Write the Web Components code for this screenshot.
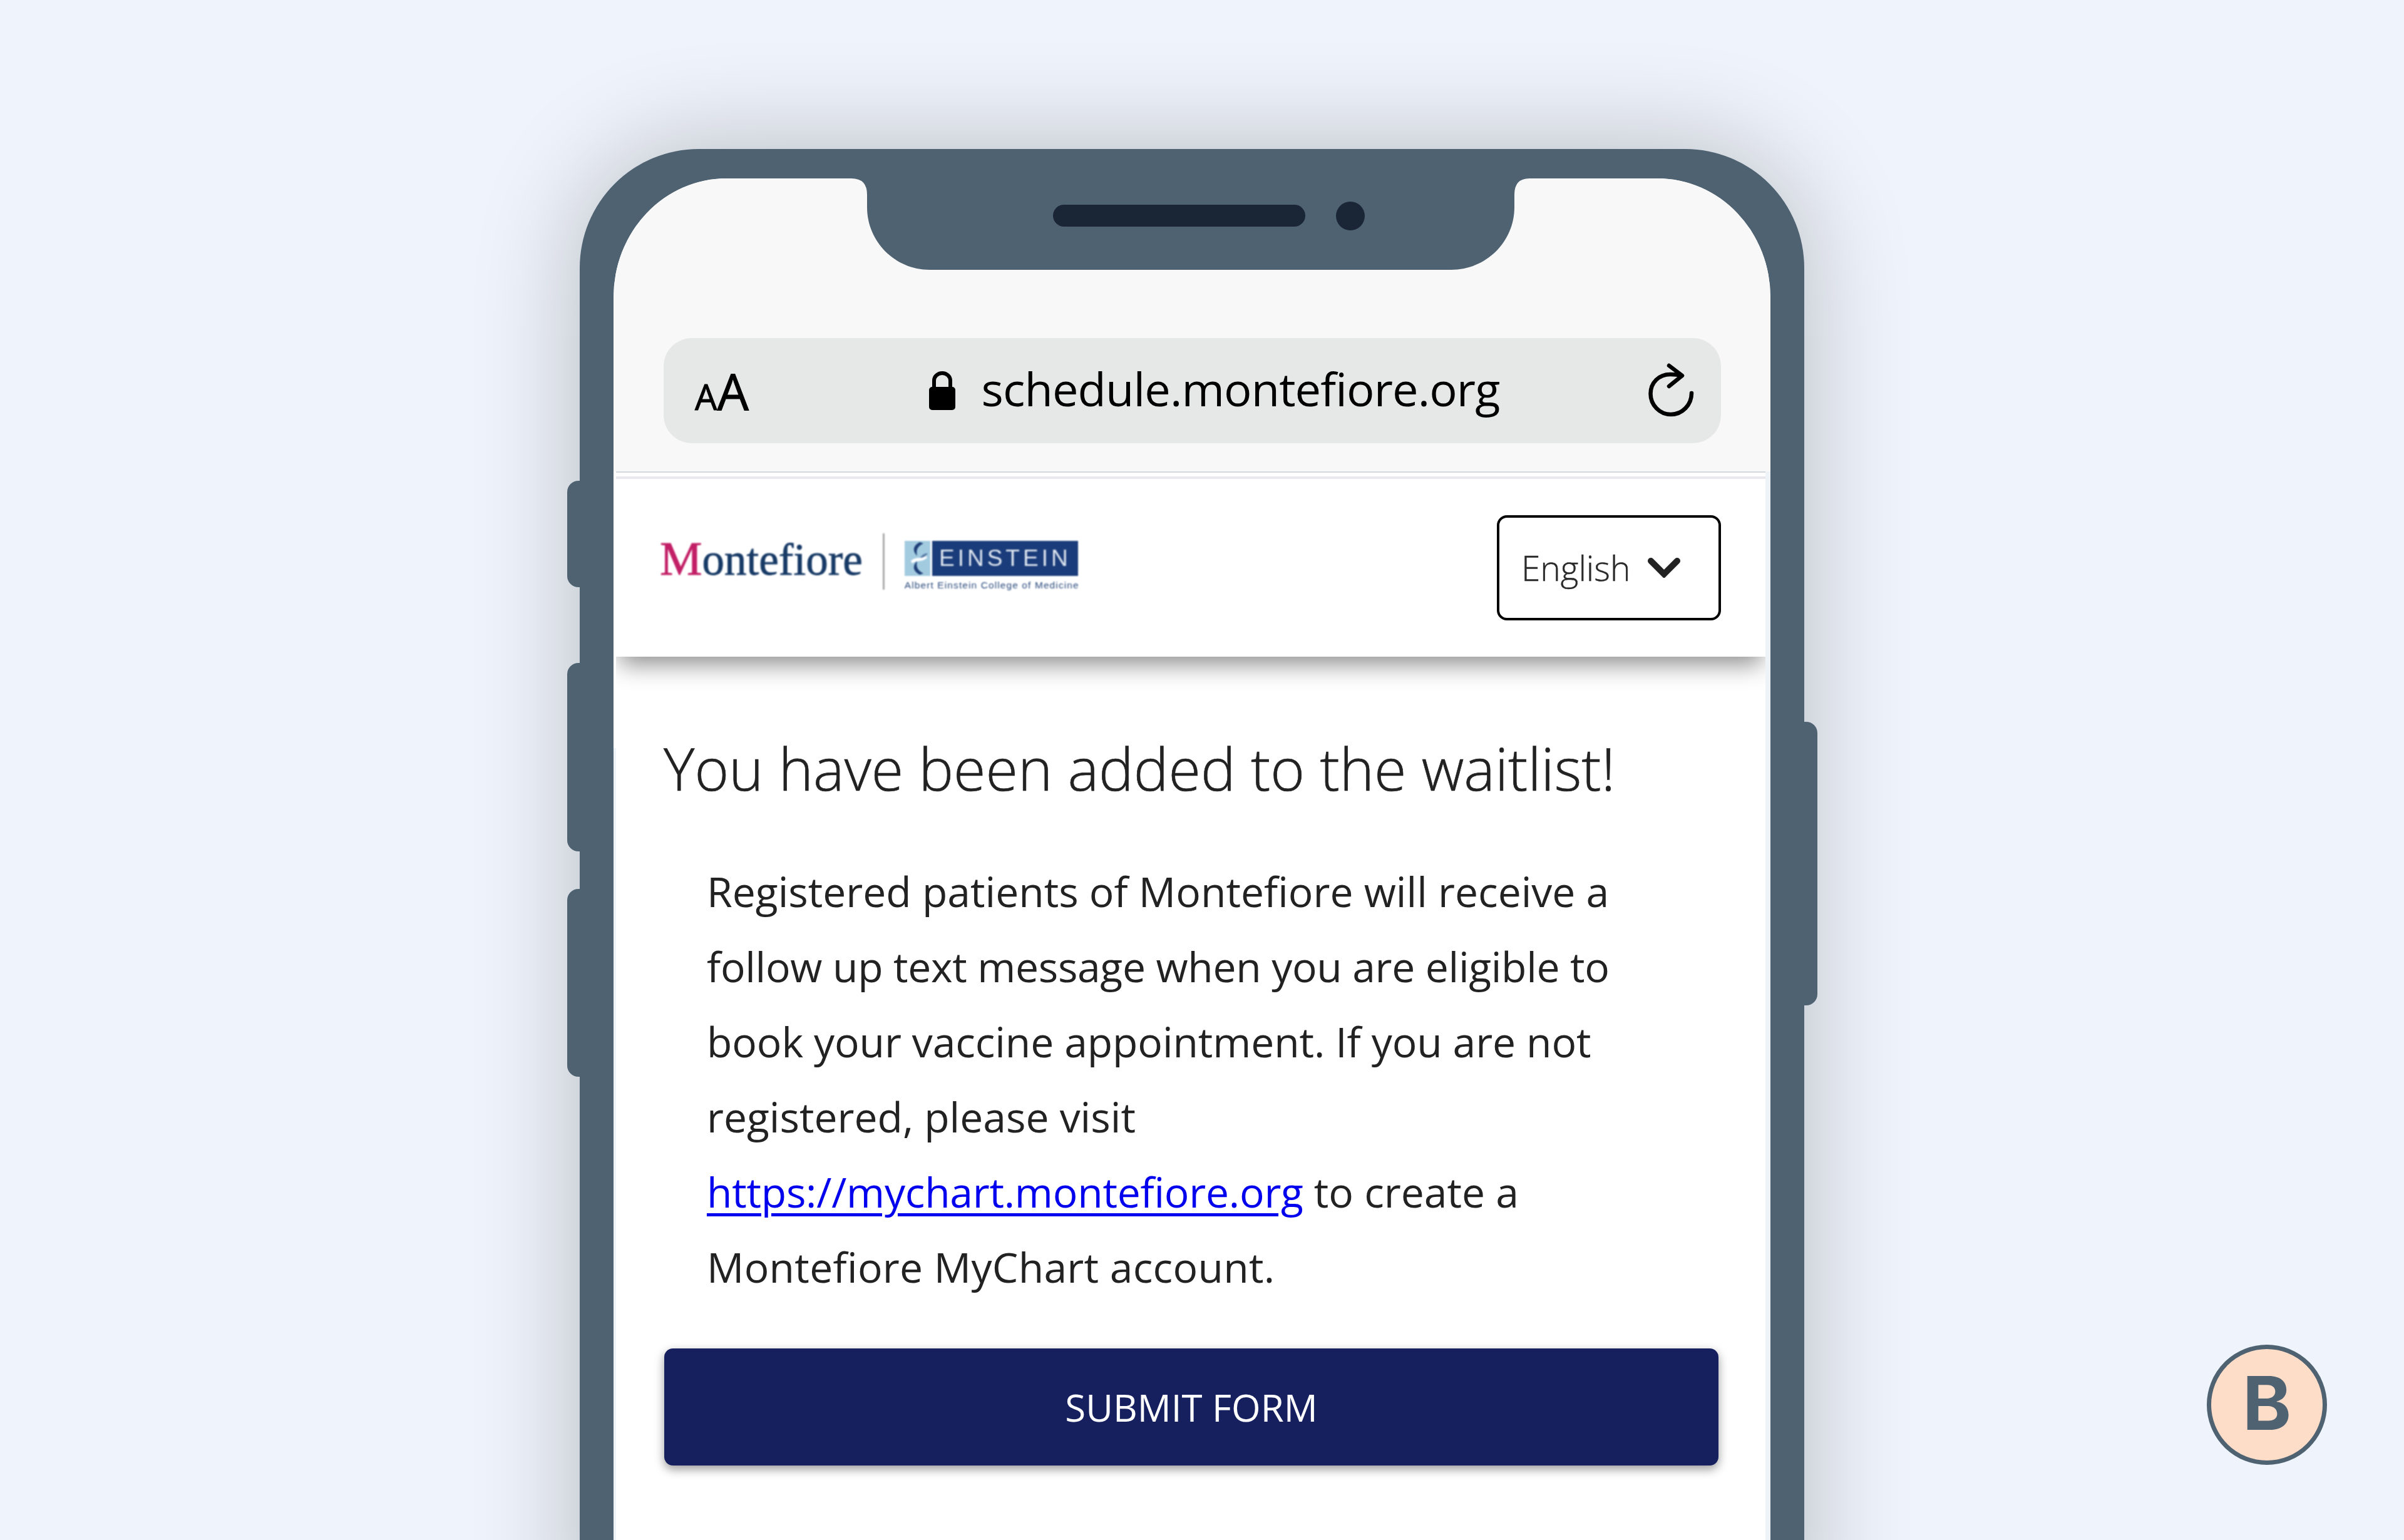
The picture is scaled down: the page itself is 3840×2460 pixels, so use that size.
<!doctype html>
<html lang="en">
<head>
<meta charset="utf-8">
<title>Waitlist</title>
<style>
  html, body { margin: 0; padding: 0; }
  body { font-family: "Open Sans", "Noto Sans", sans-serif; }
  a { color: #0000ee; text-decoration-thickness: 5px; text-underline-offset: 9px; letter-spacing: -.25px; }
</style>
</head>
<body>
<phone-stage>
  <phone-frame>
    <browser-bar url="schedule.montefiore.org"></browser-bar>
    <site-page>
      <site-header slot="header"></site-header>
      <waitlist-notice heading="You have been added to the waitlist!">
        Registered patients of Montefiore will receive a<br>
        <span style="letter-spacing:-.32px">follow up text message when you are eligible to</span><br>
        <span style="letter-spacing:-.11px">book your vaccine appointment. If you are not</span><br>
        registered, please visit<br>
        <a href="#">https://mychart.montefiore.org</a> to create a<br>
        <span style="letter-spacing:.27px">Montefiore MyChart account.</span>
      </waitlist-notice>
      <submit-button>SUBMIT FORM</submit-button>
    </site-page>
  </phone-frame>
  <step-badge>B</step-badge>
</phone-stage>

<script>
class PhoneStage extends HTMLElement {
  constructor() {
    super();
    this.attachShadow({ mode: "open" }).innerHTML = `
      <style>
        :host {
          display: block;
          position: relative;
          width: 3840px;
          height: 2460px;
          box-sizing: border-box;
          padding: 238px 0 0 926px;
          background: #eff3fb;
          overflow: hidden;
        }
      </style>
      <slot></slot>
    `;
  }
}

class PhoneFrame extends HTMLElement {
  constructor() {
    super();
    this.attachShadow({ mode: "open" }).innerHTML = `
      <style>
        :host {
          display: block;
          position: relative;
          width: 1956px;
          height: 2400px;
          box-sizing: border-box;
          padding: 47px 54px 0;
          background: #4f6272;
          border-radius: 190px 190px 0 0;
          box-shadow: 0 0 170px rgba(0, 0, 0, .24);
        }
        .screen {
          position: relative;
          height: 100%;
          background: #fff;
          border-radius: 180px 180px 0 0 / 190px 190px 0 0;
          overflow: hidden;
          display: flex;
          flex-direction: column;
        }
        .notch { position: absolute; left: 380px; top: 0; width: 1083px; height: 146px; }
        .speaker {
          position: absolute; left: 702px; top: 42px;
          width: 403px; height: 35px;
          background: #1a2535; border-radius: 18px;
        }
        .camera {
          position: absolute; left: 1154px; top: 37px;
          width: 46px; height: 46px;
          background: #1a2535; border-radius: 50%;
        }
        .key { position: absolute; background: #4f6272; }
        .key.l { left: -20px; width: 40px; border-radius: 18px 0 0 18px; }
        .key.r { right: -21px; width: 40px; border-radius: 0 18px 18px 0; }
      </style>
      <div class="key l" style="top:530px;height:170px"></div>
      <div class="key l" style="top:821px;height:301px"></div>
      <div class="key l" style="top:1182px;height:300px"></div>
      <div class="key r" style="top:915px;height:453px"></div>
      <div class="screen">
        <slot></slot>
        <svg class="notch" viewBox="0 0 1083 146">
          <path fill="#4f6272" d="M0 0 Q25 0 25 26 V46 C25 101 70 146 125 146 H958 C1014 146 1059 101 1059 46 V26 Q1059 0 1083 0 Z"/>
        </svg>
        <div class="speaker"></div>
        <div class="camera"></div>
      </div>
    `;
  }
}

class BrowserBar extends HTMLElement {
  constructor() {
    super();
    this.attachShadow({ mode: "open" });
  }

  connectedCallback() {
    this.shadowRoot.innerHTML = `
      <style>
        :host {
          display: block;
          box-sizing: border-box;
          padding: 255px 79px 45px 80px;
          background: #f8f8f8;
          font-family: "Open Sans", sans-serif;
          color: #000;
        }
        .url {
          height: 168px;
          box-sizing: border-box;
          padding: 0 43px 0 50px;
          display: flex;
          align-items: center;
          justify-content: space-between;
          background: #e6e8e7;
          border-radius: 45px;
        }
        .aa { display: flex; align-items: baseline; line-height: 1; -webkit-text-stroke: 1px #000; }
        .aa .s { font-size: 56px; }
        .aa .b { font-size: 80px; }
        .addr { display: flex; align-items: center; gap: 42px; margin-left: 51px; font-size: 74px; letter-spacing: -.9px; }
        .addr span { margin-bottom: 8px; }
        svg { display: block; }
      </style>
      <div class="url">
        <span class="aa"><span class="s">A</span><span class="b">A</span></span>
        <span class="addr">
          <svg width="42" height="62" viewBox="0 0 42 62">
            <path fill="none" stroke="#000" stroke-width="6" d="M8 28 V15 a13 12 0 0 1 26 0 V28"/>
            <rect x="0" y="25" width="42" height="37" rx="5"/>
          </svg>
          <span>${this.getAttribute("url")}</span>
        </span>
        <svg width="74" height="88" viewBox="0 0 74 88" fill="none" stroke="#000" stroke-width="6.5" stroke-linecap="round" stroke-linejoin="round">
          <path d="M70 48 C70 67 55 82 37 82 C19 82 4.500 67 4.500 49 C4.500 31 18 18 36 18 Q46 18 54 20"/>
          <path d="M34 4 L55 20 L34 37"/>
        </svg>
      </div>
    `;
  }
}

class SitePage extends HTMLElement {
  constructor() {
    super();
    this.attachShadow({ mode: "open" }).innerHTML = `
      <style>
        :host {
          display: flex;
          flex-direction: column;
          flex: 1;
          min-height: 0;
          box-sizing: border-box;
          padding: 0 8px 0 4px;
          background:
            linear-gradient(#fff 442px, #eef3f7 442px) left / 4px 100% no-repeat,
            linear-gradient(#eef3f7, #eef3f7) right / 8px 100% no-repeat,
            #fff;
        }
        .rule { height: 6px; border-top: 2px solid #d3d8dd; border-bottom: 4px solid #e8e8ee; flex: none; }
      </style>
      <div class="rule"></div>
      <slot name="header"></slot>
      <slot></slot>
    `;
  }
}

class BrandLogo extends HTMLElement {
  constructor() {
    super();
    this.attachShadow({ mode: "open" }).innerHTML = `
      <style>
        :host {
          display: flex;
          align-items: flex-start;
          height: 90px;
          filter: blur(.8px);
        }
        .name {
          font: 400 71px/76px "Liberation Serif", serif;
          color: #173a66;
          -webkit-text-stroke: .8px currentColor;
          white-space: nowrap;
          margin-top: 2px;
        }
        .name b { font-weight: 400; color: #c21f66; font-size: 76px; }
        .bar { width: 3px; height: 90px; background: #aaa; margin: 0 32px; flex: none; }
        .mark { width: 277px; margin-top: 12px; }
        .top { display: flex; gap: 3px; height: 56px; }
        .top svg { width: 41px; height: 56px; display: block; }
        .box {
          flex: 1;
          background: #1a3c7a;
          color: #dfe6f0;
          font: 400 37px/56px "Liberation Sans", sans-serif;
          letter-spacing: 5px;
          text-align: center;
        }
        .sub {
          font: 400 15.5px/17px "Liberation Sans", sans-serif;
          color: #2a4a7c;
          white-space: nowrap;
          margin-top: 6px;
          letter-spacing: 1.1px;
        }
      </style>
      <span class="name"><b>M</b>ontefiore</span>
      <span class="bar"></span>
      <div class="mark">
        <div class="top">
          <svg viewBox="0 0 41 56">
            <rect width="41" height="56" fill="#a3cbe0"/>
            <path fill="#1f3f78" d="M24 2 C13 8 12 16 20 24 C18 15 20 9 30 4 Z M24 54 C13 48 12 40 20 32 C18 41 20 47 30 52 Z"/>
            <path fill="#1f3f78" d="M34 20 C28 22 26 25 24 28 C30 27 34 24 37 20 Z" opacity=".6"/>
            <path fill="#fff" d="M10 32 C18 24 26 30 34 24 L36 27 C26 35 20 30 12 36 Z"/>
          </svg>
          <div class="box">EINSTEIN</div>
        </div>
        <div class="sub">Albert Einstein College of Medicine</div>
      </div>
    `;
  }
}

class LanguageSelect extends HTMLElement {
  constructor() {
    super();
    this.attachShadow({ mode: "open" }).innerHTML = `
      <style>
        :host {
          display: flex;
          align-items: center;
          gap: 28px;
          box-sizing: border-box;
          width: 358px;
          height: 168px;
          padding-left: 35px;
          border: 4px solid #000;
          border-radius: 16px;
          font: 300 55px "Open Sans", sans-serif;
          color: #2a2a2a;
          -webkit-text-stroke: .4px #2a2a2a;
        }
        span { margin-bottom: 2px; }
        svg { display: block; }
      </style>
      <span>English</span>
      <svg width="52" height="32" viewBox="0 0 52 32" fill="none" stroke="#222" stroke-width="10" stroke-linecap="round" stroke-linejoin="miter">
        <path d="M5 5 L26 26 L47 5"/>
      </svg>
    `;
  }
}

class SiteHeader extends HTMLElement {
  constructor() {
    super();
    this.attachShadow({ mode: "open" }).innerHTML = `
      <style>
        :host {
          display: flex;
          flex: none;
          align-items: center;
          justify-content: space-between;
          box-sizing: border-box;
          height: 284px;
          padding: 0 71px 0 70px;
          background: #fff;
          box-shadow: 0 18px 36px -6px rgba(0, 0, 0, .45);
          clip-path: inset(0 0 -70px 0);
        }
        brand-logo { margin-top: -20px; }
      </style>
      <brand-logo></brand-logo>
      <language-select></language-select>
    `;
  }
}

class WaitlistNotice extends HTMLElement {
  constructor() {
    super();
    this.attachShadow({ mode: "open" });
  }

  connectedCallback() {
    this.shadowRoot.innerHTML = `
      <style>
        :host {
          display: block;
          padding: 118px 0 0 76px;
          font-family: "Open Sans", sans-serif;
          color: #222;
        }
        h1 {
          margin: 0;
          font-weight: 300;
          font-size: 93.6px;
          line-height: 120px;
          white-space: nowrap;
          -webkit-text-stroke: .7px #222;
        }
        p {
          margin: 76px 0 0 69px;
          font-size: 66px;
          line-height: 120px;
          white-space: nowrap;
        }
      </style>
      <h1>${this.getAttribute("heading")}</h1>
      <p><slot></slot></p>
    `;
  }
}

class SubmitButton extends HTMLElement {
  constructor() {
    super();
    this.attachShadow({ mode: "open" }).innerHTML = `
      <style>
        :host {
          display: flex;
          flex: none;
          align-items: center;
          justify-content: center;
          box-sizing: border-box;
          height: 187px;
          margin: 71px 75px 0 77px;
          background: #16205f;
          border-radius: 14px;
          box-shadow: 0 6px 16px rgba(0, 0, 0, .4);
          color: #fff;
          font: 400 60px "Open Sans", sans-serif;
        }
      </style>
      <slot></slot>
    `;
  }
}

class StepBadge extends HTMLElement {
  constructor() {
    super();
    this.attachShadow({ mode: "open" }).innerHTML = `
      <style>
        :host {
          position: absolute;
          left: 3525px;
          top: 2148px;
          display: flex;
          align-items: center;
          justify-content: center;
          box-sizing: border-box;
          width: 192px;
          height: 192px;
          padding-bottom: 6px;
          background: #fddcc8;
          border: 7px solid #4f6272;
          border-radius: 50%;
          color: #4f6272;
          font: 700 118px/1 Inter, sans-serif;
        }
      </style>
      <slot></slot>
    `;
  }
}

customElements.define("phone-stage", PhoneStage);
customElements.define("phone-frame", PhoneFrame);
customElements.define("browser-bar", BrowserBar);
customElements.define("site-page", SitePage);
customElements.define("brand-logo", BrandLogo);
customElements.define("language-select", LanguageSelect);
customElements.define("site-header", SiteHeader);
customElements.define("waitlist-notice", WaitlistNotice);
customElements.define("submit-button", SubmitButton);
customElements.define("step-badge", StepBadge);
</script>
</body>
</html>
